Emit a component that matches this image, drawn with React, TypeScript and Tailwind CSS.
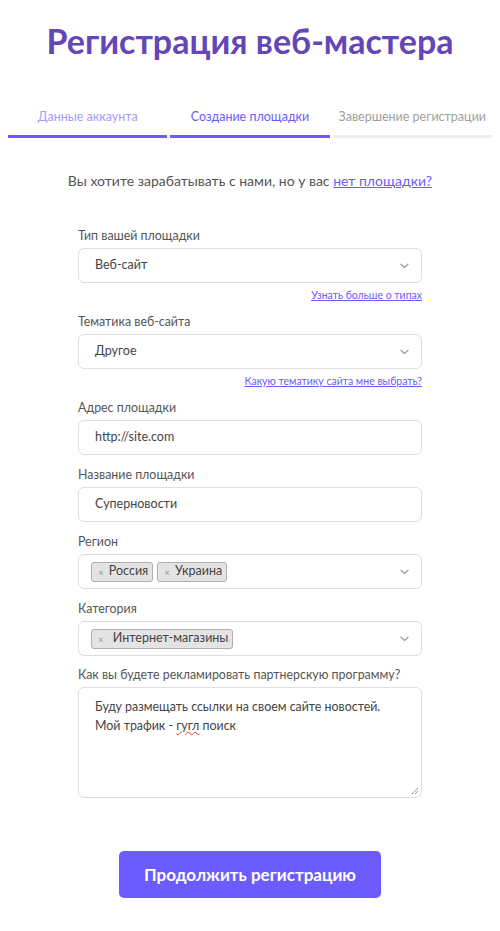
import React from "react";

const Chevron = () => (
  <svg width="9" height="6" viewBox="0 0 9 6" fill="none" className="shrink-0">
    <path d="M1 1.2l3.5 3.3L8 1.2" stroke="#a0a0a0" strokeWidth="1.3" strokeLinecap="round" strokeLinejoin="round" />
  </svg>
);

const Label = ({ children }: { children: React.ReactNode }) => (
  <div className="text-[12.4px] leading-[16px] text-[#555] mb-[4px] whitespace-nowrap">{children}</div>
);

const Box = ({ children, chevron }: { children: React.ReactNode; chevron?: boolean }) => (
  <div className="h-[35px] rounded-[6px] border border-[#dedede] bg-white flex items-center justify-between pl-[16px] pr-[12px] text-[12.5px] text-[#444]">
    <div className="flex items-center gap-[4px]">{children}</div>
    {chevron && <Chevron />}
  </div>
);

const Tag = ({ children, wide }: { children: React.ReactNode; wide?: boolean }) => (
  <span className={`h-[20px] flex items-center ${wide ? "gap-[9px]" : "gap-[5px]"} pl-[6px] pr-[4px] rounded-[3px] border border-[#b0b0b0] bg-[#e4e4e4] text-[12.5px] text-[#444] whitespace-nowrap`}>
    <span className="text-[#999] text-[10px] leading-none">×</span>
    {children}
  </span>
);

const HelpLink = ({ children }: { children: React.ReactNode }) => (
  <div className="text-right text-[10.5px] leading-[14px] mt-[5px] text-[#6c5cff] underline">{children}</div>
);

export default function App() {
  return (
    <div className="w-[500px] min-h-[931px] bg-white" style={{ fontFamily: "Lato, 'Open Sans', sans-serif" }}>
      <h1 className="text-center text-[34px] leading-[44px] font-bold text-[#6446b8] pt-[19px] whitespace-nowrap">Регистрация веб-мастера</h1>
      <div className="flex gap-[3px] px-[8px] mt-[46px]">
        <div className="w-[160px] flex flex-col items-center">
          <div className="text-[12.5px] leading-[16px] text-[#a79bff] whitespace-nowrap">Данные аккаунта</div>
          <div className="mt-[10px] w-full h-[3px] bg-[#6c5cff]" />
        </div>
        <div className="w-[160px] flex flex-col items-center">
          <div className="text-[12.5px] leading-[16px] text-[#6c5cff] whitespace-nowrap">Создание площадки</div>
          <div className="mt-[10px] w-full h-[3px] bg-[#6c5cff]" />
        </div>
        <div className="w-[160px] flex flex-col items-center">
          <div className="text-[12.5px] leading-[16px] text-[#a0a0a0] whitespace-nowrap">Завершение регистрации</div>
          <div className="mt-[10px] w-full h-[3px] bg-[#eeeef2]" />
        </div>
      </div>
      <p className="text-center text-[14px] leading-[20px] text-[#555] mt-[33px]">
        Вы хотите зарабатывать с нами, но у вас{" "}
        <span className="text-[#6c5cff] underline">нет площадки?</span>
      </p>
      <div className="w-[344px] mx-auto mt-[37px] flex flex-col">
        <Label>Тип вашей площадки</Label>
        <Box chevron>Веб-сайт</Box>
        <HelpLink>Узнать больше о типах</HelpLink>
        <div className="mt-[12px]" />
        <Label>Тематика веб-сайта</Label>
        <Box chevron>Другое</Box>
        <HelpLink>Какую тематику сайта мне выбрать?</HelpLink>
        <div className="mt-[12px]" />
        <Label>Адрес площадки</Label>
        <Box>http://site.com</Box>
        <div className="mt-[12px]" />
        <Label>Название площадки</Label>
        <Box>Суперновости</Box>
        <div className="mt-[12px]" />
        <Label>Регион</Label>
        <div className="[&>div]:pl-[12px]">
          <Box chevron>
            <Tag>Россия</Tag>
            <Tag>Украина</Tag>
          </Box>
        </div>
        <div className="mt-[12px]" />
        <Label>Категория</Label>
        <div className="[&>div]:pl-[12px]">
          <Box chevron>
            <Tag wide>Интернет-магазины</Tag>
          </Box>
        </div>
        <div className="mt-[11px]" />
        <Label>Как вы будете рекламировать партнерскую программу?</Label>
        <div className="relative h-[111px] rounded-[6px] border border-[#dedede] px-[16px] pt-[9px] text-[12.4px] leading-[19px] text-[#444]">
          <div className="whitespace-nowrap">Буду размещать ссылки на своем сайте новостей.</div>
          <div>
            Мой трафик - <span className="underline decoration-wavy decoration-red-500 decoration-[1px]">гугл</span> поиск
          </div>
          <svg className="absolute right-[2px] bottom-[2px]" width="8" height="8" viewBox="0 0 8 8">
            <path d="M7 1L1 7M7 4L4 7" stroke="#999" strokeWidth="1" />
          </svg>
        </div>
      </div>
      <div className="flex justify-center mt-[53px] pb-[32px]">
        <button className="w-[262px] h-[47px] rounded-[5px] bg-[#6c5cff] text-white font-bold text-[17px] whitespace-nowrap">Продолжить регистрацию</button>
      </div>
    </div>
  );
}
